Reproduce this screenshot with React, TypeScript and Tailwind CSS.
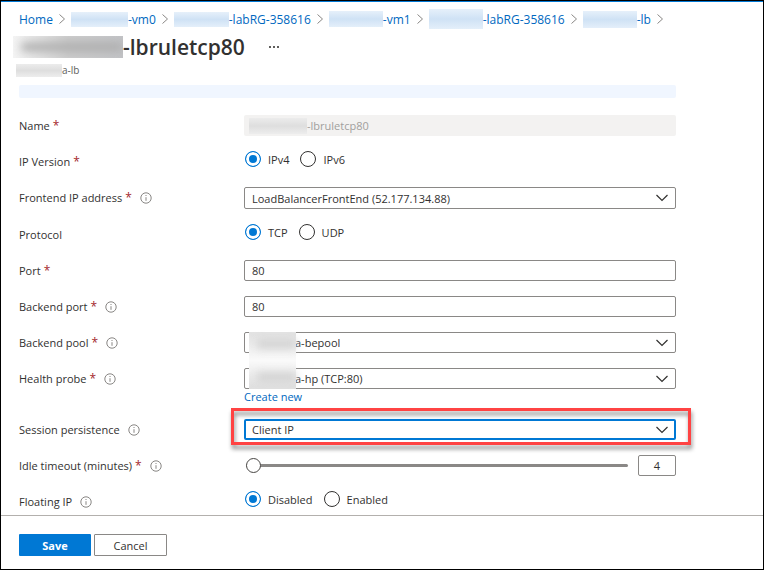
import { ReactNode } from "react";
import { clsx } from "clsx";

function CrumbChevron() {
  return (
    <svg className="mx-[5px] h-3 w-2 shrink-0" viewBox="0 0 8 12" fill="none" stroke="#8a8886" aria-hidden="true">
      <path d="M1.5 1.5 6.5 6l-5 4.5" />
    </svg>
  );
}

function InfoIcon() {
  return (
    <svg className="ml-2 h-3 w-3 shrink-0" viewBox="0 0 12 12" fill="none" stroke="#7a7876" aria-hidden="true">
      <circle cx="6" cy="6" r="5.2" strokeWidth="0.9" />
      <path d="M6 5.2v3.6M6 3v1" strokeWidth="0.9" />
    </svg>
  );
}

/** A smudged box that hides a private name. */
function Redacted({ className, tone }: { className: string; tone: "blue" | "gray" | "dark" }) {
  return (
    <span
      aria-hidden="true"
      className={clsx(
        "flex shrink-0 items-center overflow-hidden",
        tone === "blue" && "bg-linear-to-b from-[#e6f0fa] via-[#cfe2f5] to-[#e4effa]",
        tone === "gray" && "bg-linear-to-b from-[#ececec] via-[#dedede] to-[#ededed]",
        tone === "dark" && "bg-linear-to-r from-[#f4f4f4] via-[#cbcbcb] to-[#c2c3c6]",
        className,
      )}
    >
      {tone === "dark" && <span className="ml-2 h-2 w-full rounded-full bg-[#adadad] blur-[4px]" />}
    </span>
  );
}

function Crumb({ text, patch }: { text: string; patch?: string }) {
  return (
    <li className="flex items-center">
      <a href="#" className="flex h-5 items-center text-[#0068c0]">
        {patch && <Redacted tone="blue" className={patch} />}
        {text}
      </a>
      <CrumbChevron />
    </li>
  );
}

interface RowProps {
  label: string;
  id: string;
  required?: boolean;
  info?: boolean;
  group?: boolean;
  children: ReactNode;
}

function Row({ label, id, required, info, group, children }: RowProps) {
  const content = (
    <>
      {label}
      {required && <span className="ml-[3px] text-[12px] text-[#a4262c]">*</span>}
      {info && <InfoIcon />}
    </>
  );
  const style = "flex h-[21px] w-[225px] shrink-0 items-center whitespace-nowrap";
  return (
    <div className="flex items-start">
      {group ? (
        <span id={id} className={style}>
          {content}
        </span>
      ) : (
        <label htmlFor={id} className={style}>
          {content}
        </label>
      )}
      <div className="min-w-0 flex-1">{children}</div>
    </div>
  );
}

function RadioGroup({ id, options }: { id: string; options: string[] }) {
  return (
    <div role="radiogroup" aria-labelledby={id} className="flex h-[21px] items-start gap-[11px] pl-px">
      {options.map((option, i) => (
        <label key={option} className="flex h-4 items-center gap-[7px]">
          <input
            type="radio"
            name={id}
            defaultChecked={i === 0}
            className="h-4 w-4 appearance-none rounded-full border border-[#323130] bg-white checked:border-[#0078d4] checked:bg-[#0078d4] checked:shadow-[inset_0_0_0_3px_white]"
          />
          {option}
        </label>
      ))}
    </div>
  );
}

function SelectBox({ id, value, className }: { id: string; value: string; className: string }) {
  return (
    <div className="relative">
      <select id={id} className={clsx("block w-full appearance-none rounded-[2px] bg-white pr-8 outline-none", className)}>
        <option>{value}</option>
      </select>
      <svg
        className="pointer-events-none absolute inset-y-0 right-2 my-auto h-2 w-3"
        viewBox="0 0 12 8"
        fill="none"
        stroke="#323130"
        strokeWidth="1.2"
        aria-hidden="true"
      >
        <path d="M.5 1 6 6.5 11.5 1" />
      </svg>
    </div>
  );
}

const field = "block h-[21px] w-full rounded-[2px] border border-[#8a8886] bg-white px-[7px] outline-none";

export default function App() {
  return (
    <div className="flex min-h-screen flex-col border border-black bg-white font-['Open_Sans','Noto_Sans',sans-serif] text-[11px] leading-[15px] text-[#323130]">
      <main className="flex-1 border-t border-[#0078d4] pl-[18px] pr-[87px]">
        <nav aria-label="Breadcrumb" className="mt-[7px] text-[12px]">
          <ol className="flex h-5 whitespace-nowrap">
            <Crumb text="Home" />
            <Crumb text="-vm0" patch="h-[15px] w-[57px]" />
            <Crumb text="-labRG-358616" patch="h-[15px] w-[55px]" />
            <Crumb text="-vm1" patch="h-4 w-[54px]" />
            <Crumb text="-labRG-358616" patch="h-5 w-[54px]" />
            <Crumb text="-lb" patch="h-[17px] w-[54px]" />
          </ol>
        </nav>

        <header>
          <div className="-ml-[6px] mt-[2px] flex h-8 items-center">
            <Redacted tone="dark" className="h-[22px] w-[110px]" />
            <h1 className="text-[21px] font-semibold leading-8">-lbruletcp80</h1>
            <button type="button" aria-label="More" className="ml-6 flex items-center gap-[2px]">
              <span className="h-[2px] w-[2px] bg-[#605e5c]" />
              <span className="h-[2px] w-[2px] bg-[#605e5c]" />
              <span className="h-[2px] w-[2px] bg-[#605e5c]" />
            </button>
          </div>
          <p className="-ml-[3px] flex h-[14px] items-center text-[10px] text-[#605e5c]">
            <Redacted tone="gray" className="h-[13px] w-[46px]" />
            a-lb
          </p>
        </header>

        <div className="mt-2 h-[13px] max-w-[657px] rounded-[2px] bg-[#f0f6ff]" />

        <form className="mt-[17px] flex max-w-[657px] flex-col gap-[15px]">
          <Row label="Name" id="name" required>
            <div className="flex h-[21px] items-center rounded-[2px] bg-[#f3f2f1] pl-[5px]">
              <Redacted tone="gray" className="h-4 w-[58px]" />
              <input id="name" disabled defaultValue="-lbruletcp80" className="min-w-0 flex-1 bg-transparent text-[#a19f9d]" />
            </div>
          </Row>
          <Row label="IP Version" id="ip-version" required group>
            <RadioGroup id="ip-version" options={["IPv4", "IPv6"]} />
          </Row>
          <Row label="Frontend IP address" id="frontend" required info>
            <SelectBox id="frontend" value="LoadBalancerFrontEnd (52.177.134.88)" className="h-[22px] border border-[#8a8886] pl-[7px]" />
          </Row>
          <Row label="Protocol" id="protocol" group>
            <RadioGroup id="protocol" options={["TCP", "UDP"]} />
          </Row>
          <Row label="Port" id="port" required>
            <input id="port" defaultValue="80" className={field} />
          </Row>
          <Row label="Backend port" id="backend-port" required info>
            <input id="backend-port" defaultValue="80" className={field} />
          </Row>
          <Row label="Backend pool" id="pool" required info>
            <SelectBox id="pool" value="a-bepool" className="h-[21px] border border-[#8a8886] pl-[50px]" />
          </Row>
          <Row label="Health probe" id="probe" required info>
            <div className="relative">
              <SelectBox id="probe" value="a-hp (TCP:80)" className="h-[21px] border border-[#8a8886] pl-[50px]" />
              <span
                aria-hidden="true"
                className="absolute bottom-0 left-[5px] h-[57px] w-[47px] bg-linear-to-b from-[#e3e3e3] from-5% via-[#fafafa] via-50% to-[#e0e0e0] to-95%"
              >
                <span className="absolute left-2 right-0 top-2 h-2 bg-[#cfcfcf] blur-[4px]" />
                <span className="absolute bottom-2 left-2 right-0 h-2 bg-[#cfcfcf] blur-[4px]" />
              </span>
            </div>
            <a href="#" className="block w-fit pt-px leading-[14px] text-[#0068c0]">
              Create new
            </a>
          </Row>
          <Row label="Session persistence" id="session" info>
            <div className="relative">
              <div className="pointer-events-none absolute -bottom-[5px] -left-[13px] -right-[15px] -top-[11px] border-[3px] border-[#ff4343] drop-shadow-[1px_4px_2px_rgba(0,0,0,0.45)]" />
              <SelectBox id="session" value="Client IP" className="h-[21px] border-2 border-[#0078d4] pl-[6px]" />
            </div>
          </Row>
          <Row label="Idle timeout (minutes)" id="timeout" required info>
            <div className="flex h-[21px] items-center gap-[10px] pl-[2px]">
              <input
                id="timeout"
                type="range"
                min={4}
                max={30}
                defaultValue={4}
                className="h-[15px] min-w-0 flex-1 appearance-none bg-transparent [&::-webkit-slider-runnable-track]:h-[3px] [&::-webkit-slider-runnable-track]:rounded-full [&::-webkit-slider-runnable-track]:bg-[#8a8886] [&::-webkit-slider-thumb]:-mt-[6px] [&::-webkit-slider-thumb]:h-[15px] [&::-webkit-slider-thumb]:w-[15px] [&::-webkit-slider-thumb]:appearance-none [&::-webkit-slider-thumb]:rounded-full [&::-webkit-slider-thumb]:border [&::-webkit-slider-thumb]:border-[#484644] [&::-webkit-slider-thumb]:bg-white"
              />
              <input
                aria-label="Idle timeout value"
                defaultValue="4"
                className="h-[21px] w-[38px] rounded-[2px] border border-[#8a8886] text-center outline-none"
              />
            </div>
          </Row>
          <Row label="Floating IP" id="floating" info group>
            <RadioGroup id="floating" options={["Disabled", "Enabled"]} />
          </Row>
        </form>
      </main>

      <footer className="mt-[3px] flex gap-[3px] border-t border-[#b3b0ad] pb-[13px] pl-[18px] pt-[18px]">
        <button type="button" className="h-[22px] w-[72px] rounded-[1px] bg-[#0078d4] font-bold text-white">
          Save
        </button>
        <button type="button" className="h-[22px] w-[73px] rounded-[1px] border border-[#8a8886] bg-white">
          Cancel
        </button>
      </footer>
    </div>
  );
}
